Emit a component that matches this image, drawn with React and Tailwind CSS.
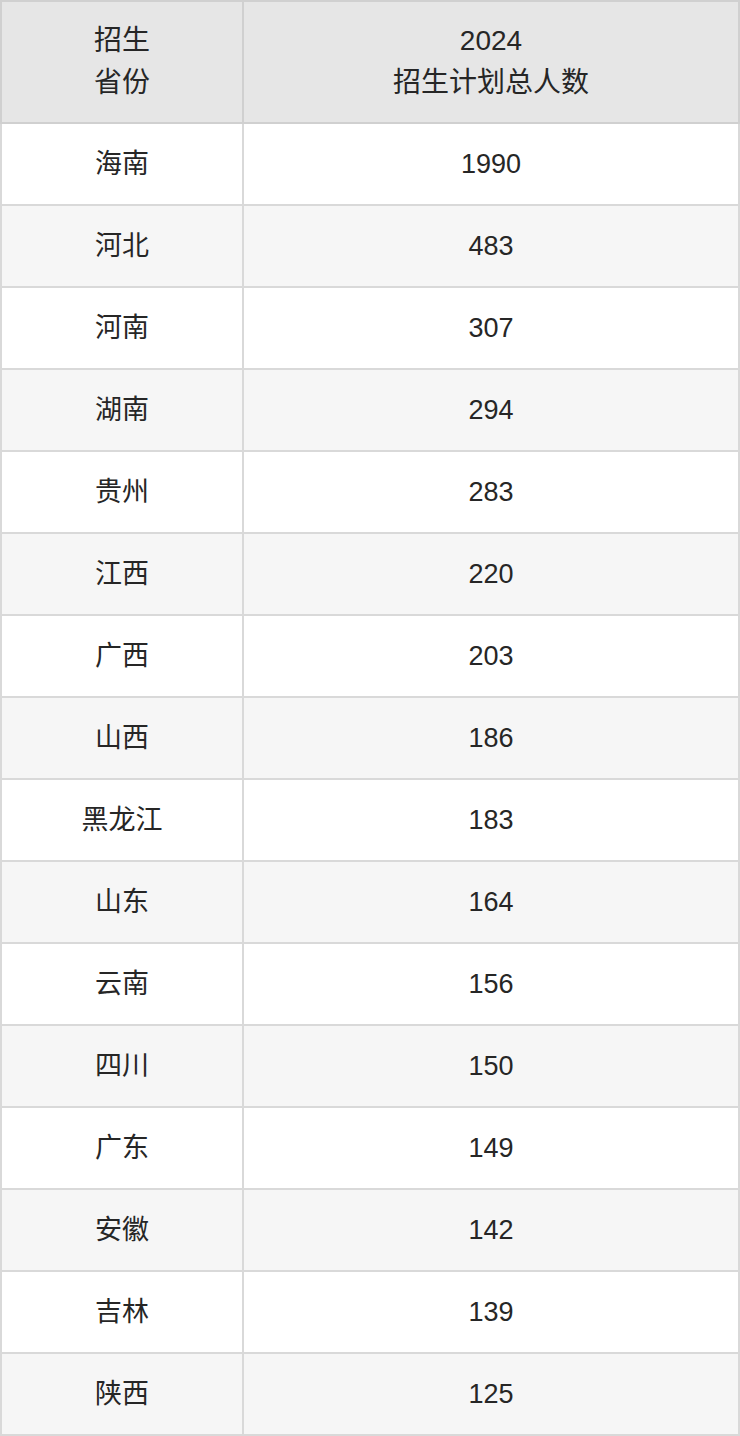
const rows = [
  ["海南", 1990],
  ["河北", 483],
  ["河南", 307],
  ["湖南", 294],
  ["贵州", 283],
  ["江西", 220],
  ["广西", 203],
  ["山西", 186],
  ["黑龙江", 183],
  ["山东", 164],
  ["云南", 156],
  ["四川", 150],
  ["广东", 149],
  ["安徽", 142],
  ["吉林", 139],
  ["陕西", 125],
];

export default function App() {
  return (
    <div className="w-[740px] bg-white font-['Liberation_Sans','Noto_Sans_CJK_SC',sans-serif] text-[27px] leading-[1.5] text-[#262626]">
      <table className="w-[740px] table-fixed border-collapse border-2 border-[#d9d9d9]">
        <colgroup>
          <col className="w-[242px]" />
          <col />
        </colgroup>
        <thead>
          <tr className="h-[122px] bg-[#e6e6e6] text-[28px]">
            <th className="border-2 border-[#d0d0d0] font-normal">
              招生
              <br />
              省份
            </th>
            <th className="border-2 border-[#d0d0d0] font-normal">
              2024
              <br />
              招生计划总人数
            </th>
          </tr>
        </thead>
        <tbody>
          {rows.map(([name, count], i) => (
            <tr key={name} className={`h-[82px] ${i % 2 === 1 ? "bg-[#f6f6f6]" : "bg-white"}`}>
              <td className="border-2 border-[#d9d9d9] text-center">{name}</td>
              <td className="border-2 border-[#d9d9d9] text-center">{count}</td>
            </tr>
          ))}
        </tbody>
      </table>
    </div>
  );
}
